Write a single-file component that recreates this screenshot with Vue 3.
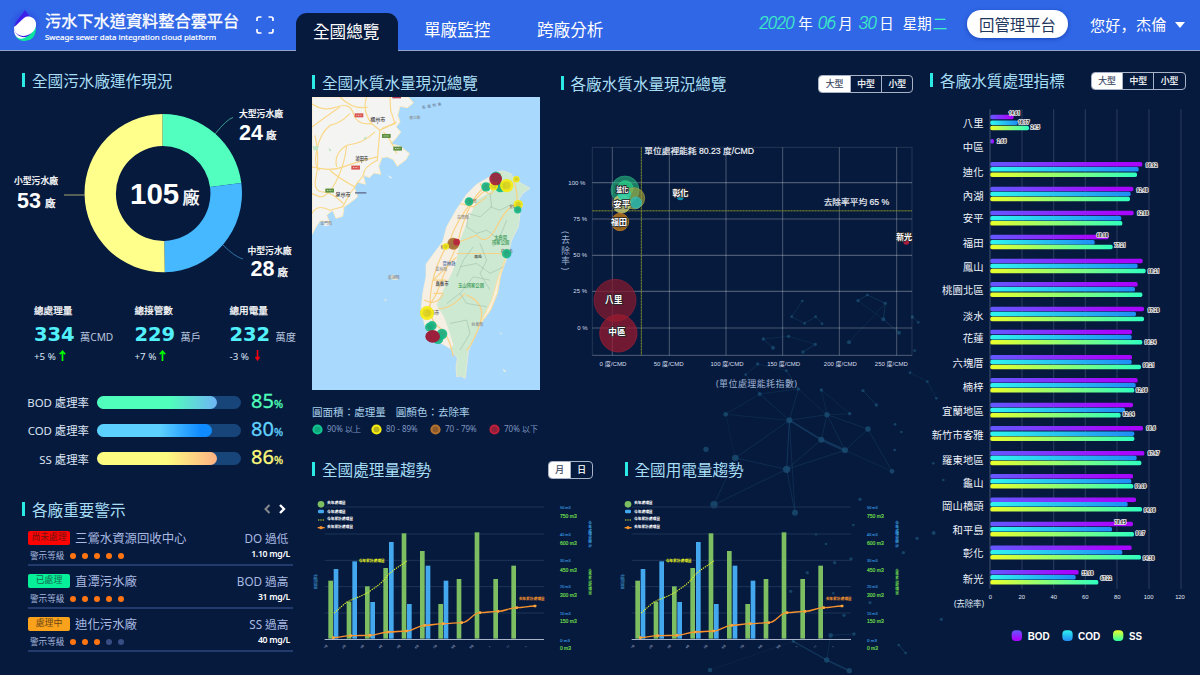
<script setup>
const kpis = [
  { name: '總處理量', value: '334', unit: '萬CMD', delta: '+5 %', up: true },
  { name: '總接管數', value: '229', unit: '萬戶', delta: '+7 %', up: true },
  { name: '總用電量', value: '232', unit: '萬度', delta: '-3 %', up: false }
]
const rates = [
  { name: 'BOD 處理率', value: 85, fill: 120, cls: 'bod' },
  { name: 'COD 處理率', value: 80, fill: 115, cls: 'cod' },
  { name: 'SS 處理率', value: 86, fill: 119.5, cls: 'ss' }
]
const alerts = [
  { tag: '尚未處理', cls: 'red', name: '三鶯水資源回收中心', level: 5, kind: 'DO 過低', val: '1.10 mg/L' },
  { tag: '已處理', cls: 'green', name: '直潭污水廠', level: 5, kind: 'BOD 過高', val: '31 mg/L' },
  { tag: '處理中', cls: 'orange', name: '迪化污水廠', level: 3, kind: 'SS 過高', val: '40 mg/L' }
]
const legend = [
  { t: '90% 以上', c: '#12c28f', d: '#0ca87b' },
  { t: '80 - 89%', c: '#f7ee10', d: '#b9b31d' },
  { t: '70 - 79%', c: '#b5722f', d: '#8d5a2a' },
  { t: '70% 以下', c: '#c01f3c', d: '#8f2039' }
]
const G = '#12b886', Y = '#f5ec10', B = '#a86c30', R = '#a51d3d'
const pins = [
  [588, 350, 16, G], [558, 380, 14, G], [601, 380, 16, G], [581, 378, 13, Y], [587, 356, 19, R], [620, 376, 20, Y], [649, 357, 10, Y],
  [507, 424, 13, G], [655, 433, 14, Y], [653, 449, 11, G], [460, 551, 18, B], [470, 546, 10, '#c01f3c'], [437, 559, 10, Y],
  [620, 581, 14, G], [381, 759, 21, Y], [396, 797, 14, G], [388, 801, 13, G], [426, 822, 16, G], [414, 836, 16, G]
]
const mapText = [
  [233, 176, '福州市', '#333', 15], [185, 294, '莆田市', '#333', 13], [129, 400, '泉州市', '#333', 15], [79, 489, '金門縣', '#888', 12],
  [344, 171, '連江縣', '#888', 11], [281, 652, '澎湖縣', '#888', 12], [489, 469, '苗栗縣', '#888', 12], [602, 531, '太魯閣', '#3a9b55', 13],
  [602, 547, '國家公園', '#3a9b55', 13], [513, 674, '玉山國家公園', '#3a9b55', 13], [447, 609, '雲林縣', '#4a6da8', 13], [424, 626, '雲林縣', '#999', 12],
  [426, 668, '嘉義市', '#333', 13], [532, 792, '台東縣', '#888', 12], [534, 590, '南投', '#333', 11], [644, 440, '宜蘭縣', '#777', 11],
  [398, 755, '台南市', '#555', 13], [518, 422, '新竹', '#555', 12], [434, 560, '彰化', '#555', 12], [620, 574, '花蓮市', '#555', 12]
]
const badges = [[177, 165, '#d9534f'], [259, 227, '#5c8f3f'], [167, 322, '#d9534f'], [89, 391, '#5c8f3f'], [293, 265, '#5c8f3f'], [290, 108, '#b33b52']]
const xTicks = [[187, '0 度/CMD', 189], [358, '50 度/CMD', 356], [528, '100 度/CMD', 531], [698, '150 度/CMD', 701], [868, '200 度/CMD', 871], [1040, '250 度/CMD', 1024]]
const yTicks = [[368, '100 %'], [477, '75 %'], [586, '50 %'], [694, '25 %'], [804, '0 %']]
const bubbles = [
  [225, 390, 42, 'rgba(42,190,130,.6)', '#2aa57c'], [226, 385, 23, 'rgba(40,230,140,.55)', '#37d38c'], [252, 415, 32, 'rgba(170,170,60,.6)', '#a3a344'],
  [258, 428, 17, 'rgba(30,190,190,.75)', '#4bb'], [215, 432, 27, 'rgba(200,205,120,.8)', '#d6cf62'], [223, 403, 20, 'rgba(25,210,180,.75)', 'none'],
  [210, 486, 26, 'rgba(170,110,25,.9)', '#c9862a'], [391, 411, 10, '#138fae', 'none'], [1069, 545, 9, '#a81c3c', 'none'],
  [195, 721, 63, 'rgba(130,25,45,.75)', '#8e2138'], [205, 820, 56, 'rgba(160,25,45,.7)', '#9e2138']
]
const bubbleText = [
  [217, 387, '迪化', 20, 36], [215, 433, '安平', 25, 50], [207, 486, '福田', 25, 48], [391, 400, '彰化', 25, 48],
  [1062, 532, '新光', 25, 48], [191, 719, '八里', 26, 52], [201, 817, '中區', 26, 52]
]
const trends = [
  { title: '全國處理量趨勢', cls: 'first', toggle: true, y2: '今年處理量統計', y3: '今年累計處理量' },
  { title: '全國用電量趨勢', cls: 'second', toggle: false, y2: '今年處理量統計', y3: '今年累計處理量' }
]
const greenBars = [[92, 377], [147, 440], [202, 394], [257, 339], [312, 235], [367, 288], [422, 447], [477, 372], [531, 232], [587, 372], [641, 332]]
const blueBars = [[108, 342], [164, 319], [218, 441], [274, 261], [328, 447], [384, 332], [438, 377]]
const months = ['1月', '2月', '3月', '4月', '5月', '6月', '7月', '8月', '9月', '1', '11', '1']
const linePts = [[100, 548], [152, 542], [210, 541], [265, 531], [320, 528], [374, 511], [430, 506], [485, 503], [540, 473], [594, 469], [650, 458], [705, 453]]
const gridY = [156, 237, 316, 395, 474]
const cubic = ['50 m3', '40 m3', '30 m3', '20 m3', '10 m3', '0 m3']
const cubicY = [157, 238, 317, 395, 474, 556]
const total = [['750 m3', 182], ['600 m3', 264], ['450 m3', 345], ['300 m3', 420], ['150 m3', 497], ['0 m3', 579]]
const chartLegend = [[142, '去年處理量', 56], [168, '今年處理量', 56], [190, '今年累計處理量', 78], [213, '去年累計處理量', 78]]
const plants = [
  { n: '八里', y: 190, b: [[171, 281], [188, 293], [204, 327]], l: [[283, 160, '14.61'], [311, 185, '16.77'], [346, 201, '24.5']] },
  { n: '中區', y: 262, b: [[244, 222]], l: [[245, 244, '2.66']] },
  { n: '迪化', y: 335, b: [[313, 667], [328, 656], [344, 651]], l: [[695, 314, '96.92']] },
  { n: '內湖', y: 408, b: [[387, 640], [402, 632], [417, 630]], l: [[667, 391, '92.48']] },
  { n: '安平', y: 474, b: [[459, 641], [475, 604], [490, 607]], l: [[669, 458, '92.88']] },
  { n: '福田', y: 548, b: [[531, 566], [547, 524], [561, 578]], l: [[547, 526, '68.98'], [600, 556, '77.21']] },
  { n: '鳳山', y: 620, b: [[603, 668], [618, 653], [633, 677]], l: [[701, 633, '98.21']] },
  { n: '桃園北區', y: 690, b: [[673, 653], [688, 645], [704, 667]], l: [] },
  { n: '淡水', y: 767, b: [[747, 672], [762, 648], [777, 672]], l: [[701, 749, '97.28']] },
  { n: '花蓮', y: 834, b: [[816, 636], [832, 635], [847, 667]], l: [[691, 847, '96.34']] },
  { n: '六塊厝', y: 910, b: [[892, 636], [906, 635], [921, 663]], l: [[686, 916, '96.21']] },
  { n: '楠梓', y: 980, b: [[961, 653], [976, 647], [991, 643]], l: [[665, 991, '92.96']] },
  { n: '宜蘭地區', y: 1054, b: [[1035, 639], [1050, 615], [1066, 602]], l: [[626, 1061, '82.04']] },
  { n: '新竹市客雅', y: 1125, b: [[1105, 669], [1121, 643], [1136, 643]], l: [[693, 1105, '96.6']] },
  { n: '羅東地區', y: 1200, b: [[1180, 673], [1194, 650], [1209, 664]], l: [[701, 1180, '97.47']] },
  { n: '龜山', y: 1268, b: [[1249, 639], [1264, 634], [1279, 640]], l: [[662, 1277, '90.09']] },
  { n: '岡山橋頭', y: 1339, b: [[1319, 648], [1333, 623], [1348, 666]], l: [[689, 1349, '94.96']] },
  { n: '和平島', y: 1411, b: [[1392, 639], [1408, 576], [1423, 642]], l: [[601, 1386, '78.65'], [661, 1418, '90.7']] },
  { n: '彰化', y: 1480, b: [[1463, 635], [1477, 607], [1492, 663]], l: [[686, 1493, '94.38']] },
  { n: '新光', y: 1557, b: [[1537, 476], [1552, 467], [1567, 535]], l: [[503, 1538, '55.98'], [558, 1553, '67.22']] }
]
const rightTicks = [[211, '0'], [305, '20'], [401, '40'], [496, '60'], [592, '80'], [686, '100'], [780, '120']]
const series = [['BOD', 275, 323, 66], ['COD', 427, 474, 67], ['SS', 579, 627, 39]]
const gridX = [306, 401, 496, 591, 687, 783]
const nodes = [
  [928, 571, 9], [1041, 554, 8], [1024, 629, 9], [1095, 661, 9], [1164, 597, 8], [920, 718, 11], [766, 684, 10], [737, 553, 7], [839, 492, 6], [678, 658, 8],
  [945, 848, 9], [702, 824, 11], [1236, 724, 7], [1109, 551, 5], [1189, 525, 5], [1149, 482, 5], [1024, 480, 5], [955, 477, 5], [919, 422, 4], [833, 402, 5],
  [797, 434, 4], [879, 353, 6], [850, 327, 5], [926, 319, 5], [969, 366, 5], [1006, 343, 5], [1107, 337, 6], [1134, 212, 5], [1162, 195, 4], [1216, 220, 5],
  [1210, 268, 6], [1257, 308, 6], [1297, 261, 5], [1315, 277, 4], [935, 260, 4], [974, 280, 4], [1007, 260, 4], [1026, 281, 4], [967, 213, 4], [1290, 428, 4],
  [1342, 455, 4], [1369, 505, 4], [1304, 362, 4], [1361, 909, 6], [1311, 925, 5], [1270, 968, 5], [1040, 1290, 8], [1108, 1322, 8], [690, 1320, 7], [1052, 1216, 7],
  [1122, 1212, 5], [940, 1234, 5], [1256, 1245, 4], [1277, 1269, 4], [1140, 808, 5], [1008, 913, 4], [1038, 942, 4], [982, 1028, 5], [932, 1084, 5], [1113, 987, 5],
  [1092, 1156, 5], [1064, 998, 5], [1244, 660, 4], [1264, 606, 4], [1245, 583, 4], [1384, 1168, 5], [1120, 885, 4], [1170, 1118, 5], [1060, 1090, 4],
  [1440, 590, 5], [1390, 750, 4], [1360, 700, 4]
]
const links = [
  [0, 1, 2], [0, 2, 5], [2, 3, 7], [1, 3, 2], [1, 2, 2], [1, 4, 2], [3, 4, 2], [0, 5, 3], [5, 2, 2], [5, 3, 2], [5, 6, 2], [5, 10, 2], [0, 6, 2], [0, 10, 2], [5, 11, 2], [6, 11, 2],
  [0, 7, 1.5], [7, 8, 1.5], [8, 17, 1.5], [17, 0, 2], [17, 1, 1.5], [16, 1, 1.5], [16, 13, 1.5], [13, 1, 1.5], [15, 14, 2.5], [17, 18, 2], [18, 19, 1.5], [19, 20, 2], [20, 8, 1.5],
  [4, 12, 2], [3, 12, 1.5], [21, 22, 2], [22, 23, 1.5], [24, 25, 2.5], [25, 23, 1.5], [26, 29, 1.5], [27, 28, 2.5], [28, 29, 2.5], [29, 30, 2.5], [30, 31, 2.5], [27, 30, 1.5],
  [32, 33, 2], [34, 35, 2], [35, 36, 2], [36, 37, 2], [34, 38, 2], [39, 40, 1.5], [40, 41, 1.5], [46, 47, 5], [46, 51, 4], [49, 50, 2], [49, 46, 2], [52, 53, 3], [6, 7, 1], [8, 0, 2], [48, 51, 1]
]
const smooth = (p) => {
  let d = `M${p[0]}`
  for (let i = 1; i < p.length; i++) {
    const m = (p[i][0] - p[i - 1][0]) * 0.42
    d += ` C${p[i - 1][0] + m},${p[i - 1][1]} ${p[i][0] - m},${p[i][1]} ${p[i]}`
  }
  return d
}
const linePath = smooth(linePts)
</script>

<template>
  <div class="page">
    <svg class="network" viewBox="480 230 470 445">
      <g transform="translate(480 230) scale(.33333)">
        <line v-for="(l, i) in links" :key="'l' + i" :x1="nodes[l[0]][0]" :y1="nodes[l[0]][1]" :x2="nodes[l[1]][0]" :y2="nodes[l[1]][1]" stroke="#1b4a70" :stroke-width="l[2]" opacity=".6" />
        <circle v-for="(n, i) in nodes" :key="'n' + i" :cx="n[0]" :cy="n[1]" :r="n[2]" fill="#1b5074" opacity=".75" />
      </g>
    </svg>

    <header>
      <svg class="logo" viewBox="0 0 32 38">
        <defs><radialGradient id="halo"><stop offset="0" stop-color="#2a3fe0" /><stop offset="1" stop-color="#2a3fe0" stop-opacity="0" /></radialGradient></defs>
        <circle cx="16" cy="17" r="16" fill="url(#halo)" />
        <path d="M16 3 C13.500 8 5 14 5 23 A11 11 0 0 0 27 23 C27 14 19 8 16 3Z" fill="#3c1fe8" />
        <path d="M26 17 C29 25 25 34 16 34 C11 34 8 32 6 28 C13 34 24 30 26 17Z" fill="#0be3a0" />
        <path d="M15 11 C19 8 26 10 27 16 C28 24 20 29 14 29 C7 28 5 24 5 20 C8 18 11 14 15 11Z" fill="#fff" />
        <path d="M5 21 C6 27 11 31 17 30 C12 34 4 31 5 21Z" fill="#fff" />
      </svg>
      <div class="brand">
        <h1>污水下水道資料整合雲平台</h1>
        <p>Sweage sewer data integration cloud platform</p>
      </div>
      <svg class="full" viewBox="0 0 18 18"><path d="M1 5V3Q1 1 3 1H5.500M12.500 1H15Q17 1 17 3V5M17 13V15Q17 17 15 17H12.500M5.500 17H3Q1 17 1 15V13" fill="none" stroke="#fff" stroke-width="1.700" /></svg>
      <nav>
        <a class="active">全國總覽</a><a>單廠監控</a><a>跨廠分析</a>
      </nav>
      <div class="date"><i>2020</i><span class="yr">年</span><i>06</i><span>月</span><i class="d3">30</i><span>日</span><span class="wk">星期<b>二</b></span></div>
      <button class="back">回管理平台</button>
      <div class="user"><u>您好，</u><span>杰倫</span><em></em></div>
    </header>

    <main>
      <section class="left">
        <h2>全國污水廠運作現況</h2>
        <svg class="donut" viewBox="0 95 300 195">
          <path d="M162.500 114 A79 79 0 0 1 241.300 183 L210 187 A47.500 47.500 0 0 0 162.500 146Z" fill="#52ffbf" />
          <path d="M241.300 183 A79 79 0 0 1 164.800 272.300 L164.300 241 A47.500 47.500 0 0 0 210 187Z" fill="#45b8ff" />
          <path d="M164.800 272.300 A79 79 0 0 1 162.500 114 L162.500 146 A47.400 47.400 0 0 0 164.300 241Z" fill="#ffff8c" />
          <path d="M215 134 Q227 119 233 117.500" stroke="#3a9d91" fill="none" />
          <path d="M223 245 Q235 257 243 259" stroke="#2e6fa5" fill="none" />
          <path d="M64 195H85" stroke="#a5a574" />
          <g class="w">
            <text x="239" y="113.500" class="m" font-size="8.800" textLength="44">大型污水廠</text>
            <text x="239" y="132.500" font-size="21.500">24</text><text x="266" y="134.500" class="m" font-size="10.500">廠</text>
            <text x="14" y="180" class="m" font-size="8.800" textLength="44">小型污水廠</text>
            <text x="17" y="200.500" font-size="21.500">53</text><text x="45" y="202.500" class="m" font-size="10.500">廠</text>
            <text x="247.500" y="250.500" class="m" font-size="8.800" textLength="44">中型污水廠</text>
            <text x="250.500" y="269" font-size="21.500">28</text><text x="277.500" y="271" class="m" font-size="10.500">廠</text>
            <text x="130" y="193.500" font-size="29.500">105</text><text x="182.500" y="196" class="m" font-size="17">廠</text>
          </g>
        </svg>
        <div class="kpis">
          <div v-for="k in kpis" :key="k.name" class="kpi">
            <h3>{{ k.name }}</h3>
            <p><strong>{{ k.value }}</strong><span>{{ k.unit }}</span></p>
            <div class="delta">{{ k.delta }}
              <svg v-if="k.up" viewBox="0 0 7 11"><path d="M3.500 11V2M.8 4.300L3.500 1.300L6.200 4.300" fill="none" stroke="#0f0" stroke-width="1.700" /></svg>
              <svg v-else class="dn" viewBox="0 0 7 11"><path d="M3.500 0V9M1.500 7L3.500 9.700L5.500 7" fill="none" stroke="#f00010" stroke-width="1.600" /></svg>
            </div>
          </div>
        </div>
        <div class="rates">
          <div v-for="r in rates" :key="r.name" class="rate" :class="r.cls">
            <span class="rl">{{ r.name }}</span>
            <div class="track"><div class="fill" :style="{ width: r.fill + 'px' }"></div></div>
            <span class="rv">{{ r.value }}<small>%</small></span>
          </div>
        </div>
        <div class="ahead"><h2>各廠重要警示</h2>
          <svg viewBox="0 0 24 10"><path d="M6.500 1L2.500 5L6.500 9" fill="none" stroke="#85878c" stroke-width="2" /><path d="M17 1L21 5L17 9" fill="none" stroke="#fff" stroke-width="2.300" /></svg>
        </div>
        <div v-for="a in alerts" :key="a.tag" class="alert">
          <div class="row"><span class="tag" :class="a.cls">{{ a.tag }}</span><span class="an">{{ a.name }}</span><span class="ak">{{ a.kind }}</span></div>
          <div class="row r2"><span class="al">警示等級</span><i v-for="n in 5" :key="n" :class="{ off: n > a.level }"></i><span class="av">{{ a.val }}</span></div>
        </div>
      </section>

      <section class="center">
        <div class="top">
          <div class="mapbox">
            <h2>全國水質水量現況總覽</h2>
            <svg class="map" viewBox="36 110 684 880" preserveAspectRatio="none">
              <rect x="36" y="110" width="684" height="880" fill="#a9d9fd" />
              <path d="M36 110H325L340 128L322 142L300 138L293 165L300 185L288 200L302 215L285 238L270 250L300 258L328 280L318 298L292 318L280 298L262 290L246 292L236 318L242 342L222 338L208 352L190 345L196 372L172 365L163 382L172 410L150 428L132 440L128 468L108 474L98 450L80 465L88 485L60 482L48 500L36 522Z" fill="#f4f4f3" stroke="#fdebc0" stroke-width="3" />
              <path d="M262 345l14 6l-4 4zM70 490l25-5l-5 10l-18 3z" fill="#f4f4f3" />
              <g fill="none" stroke="#f9d888" stroke-width="3.500">
                <path d="M36 130Q70 155 110 140T160 160T215 190L240 210Q270 195 290 185M200 110Q185 150 215 190M120 110Q160 150 205 140M240 210Q235 260 232 300Q190 320 190 345Q150 395 128 440L90 450Q50 430 36 460" />
                <path d="M36 320Q90 335 130 320T232 290M140 255Q135 310 110 360T60 410L36 400M140 255Q190 250 225 215M90 195Q60 220 50 270T60 330M45 225Q60 300 48 350T80 395M36 200Q90 160 120 140M140 255Q100 280 110 320M165 380Q110 350 90 330M130 430Q100 400 75 395M250 215Q275 240 290 280M270 110L272 150L285 190L245 205M150 160Q120 190 90 195" />
              </g>
              <path d="M85 262l10 8l-6 4zM38 258l18 0l-3 12l-12 0zM190 235l10-8l-4 12z" fill="#bfe5c4" />
              <path d="M610 332L632 340L645 358L668 372L690 384L668 400L650 428L660 462L655 500L635 540L622 590L602 645L592 700L572 750L548 782L525 830L506 870L501 910L496 955L482 948L470 950L468 920L472 895L452 866L425 850L395 838L376 802L363 750L368 700L378 650L378 612L405 575L428 545L440 500L468 450L500 402L530 372L572 348L590 335Z" fill="#cde9d2" stroke="#f4ead0" stroke-width="2" />
              <path d="M572 348L530 372L500 402L468 450L440 500L428 545L405 575L378 612L378 650L368 700L363 750L376 802L395 838L425 850L452 866L460 855L450 820L432 770L410 735L430 690L455 640L470 600L480 540L500 490L530 420L570 395L600 360Z" fill="#f6efe3" />
              <path d="M618 590L595 650L575 720L535 800L548 782L572 750L592 700L602 645Z" fill="#f8f0dc" stroke="#f8dfa3" stroke-width="3" />
              <g fill="none" stroke="#f9d184" stroke-width="3.500">
                <path d="M605 340Q540 385 520 420Q470 480 450 540Q400 620 392 700T415 800T460 890M590 365Q520 410 500 460T470 560Q430 640 410 700L380 750" />
                <path d="M640 360Q655 400 650 430Q620 440 590 500T530 525L465 550M470 580H600L620 590M372 720Q410 740 430 700M495 700Q450 750 415 745M470 590Q450 610 400 660H440M500 705Q560 730 540 790T500 870M540 370Q570 420 580 390M400 700H430M480 430L520 440L560 410" />
              </g>
              <g fill="none" stroke="#a3c3ad" stroke-width="2">
                <path d="M570 400L575 440L540 470L505 460L500 500L530 520L560 510L600 540M620 480L600 530L580 560M480 620L530 610L570 640L610 620M480 700L520 650L570 660M440 730L480 700L500 730L560 740M450 790L500 780L510 820L480 870M540 550L560 600L540 640L570 690M570 440L600 450L640 430M520 560L490 600L470 650" />
              </g>
              <g v-for="(b, i) in badges" :key="'b' + i"><rect :x="b[0] - 13" :y="b[1] - 6" width="26" height="12" :fill="b[2]" /><path :d="`M${b[0] - 8} ${b[1]}h16`" stroke="#fff" stroke-width="2" stroke-dasharray="3 2" /></g>
              <path d="M268 650l14-8l4 10l12 2l-8 6l-14-2zM252 716l8 4l-4 4zM598 817l8 2l-4 4zM608 926l12 8l-8 2zM265 685l4 3z" fill="#e8eede" />
              <text v-for="(t, i) in mapText" :key="'t' + i" :x="t[0]" :y="t[1]" :fill="t[3]" :font-size="t[4]" text-anchor="middle" class="m">{{ t[2] }}</text>
              <text x="366" y="142" fill="#6d7f9b" font-size="11" letter-spacing="5" transform="rotate(-12 366 142)" class="m">馬祖列島</text>
              <path d="M233 187v3M185 304v3M129 411v3M165 398h34" stroke="#446" stroke-width="3" />
              <g v-for="(p, i) in pins" :key="'p' + i"><circle :cx="p[0]" :cy="p[1]" :r="p[2]" :fill="p[3]" opacity=".92" /><circle :cx="p[0]" :cy="p[1]" :r="p[2] * .6" fill="#654" opacity=".16" /></g>
              <ellipse cx="398" cy="829" rx="22" ry="19" fill="#9c1f3c" />
            </svg>
            <p class="lt"><span>圓面積：處理量</span><span>圓顏色：去除率</span></p>
            <div class="lg"><span v-for="l in legend" :key="l.t"><svg viewBox="0 0 11 11"><circle cx="5.500" cy="5.500" r="5.100" :fill="l.c" /><circle cx="5.500" cy="5.500" r="3" :fill="l.d" /></svg>{{ l.t }}</span></div>
          </div>
          <div class="scatter">
            <div class="hd"><h2>各廠水質水量現況總覽</h2><div class="seg"><b>大型</b><b>中型</b><b>小型</b></div></div>
            <svg viewBox="0 180 1125 840">
              <g stroke="#fff" fill="none">
                <rect x="127" y="262" width="959" height="624" opacity=".12" stroke-width="3" />
                <path v-for="t in xTicks" :key="t[0]" :d="`M${t[0]} 262V886`" opacity=".28" stroke-width="3" />
                <path v-for="t in yTicks" :key="t[0]" :d="`M127 ${t[0]}H1086`" opacity=".28" stroke-width="3.500" />
                <path d="M127 886H1086" opacity=".2" stroke-width="3" />
              </g>
              <path d="M274 262V886M127 452.500H1086" stroke="#85902a" stroke-width="3" stroke-dasharray="7 2" fill="none" />
              <circle v-for="(b, i) in bubbles" :key="i" :cx="b[0]" :cy="b[1]" :r="b[2]" :fill="b[3]" :stroke="b[4]" stroke-width="2" />
              <text v-for="t in bubbleText" :key="t[2]" :x="t[0]" :y="t[1]" :font-size="t[3]" :textLength="t[4]" class="bt" text-anchor="middle">{{ t[2] }}</text>
              <text x="283" y="273" class="wt" font-size="25" textLength="329" lengthAdjust="spacingAndGlyphs">單位處裡能耗 80.23 度/CMD</text>
              <text x="821" y="427" class="wt" font-size="25.500" textLength="197" lengthAdjust="spacingAndGlyphs">去除率平均 65 %</text>
              <text v-for="t in yTicks" :key="t[1]" :x="t[0] === 804 ? 113 : t[0] === 368 ? 106 : 111" :y="t[0]" class="tick" font-size="18" text-anchor="end">{{ t[1] }}</text>
              <text v-for="t in xTicks" :key="t[1]" :x="t[2]" y="912" class="tick" font-size="18" text-anchor="middle" :textLength="t[1].length * 9 + 18" lengthAdjust="spacingAndGlyphs">{{ t[1] }}</text>
              <text x="498" y="970" fill="#9db0cf" font-size="27" textLength="243">(單位處理能耗指數)</text>
              <text x="44" y="514" fill="#9db0cf" font-size="26" class="vert" textLength="116">(去除率)</text>
            </svg>
          </div>
        </div>
        <div class="bottom">
          <div v-for="t in trends" :key="t.title" class="trend" :class="t.cls">
            <div class="hd"><h2>{{ t.title }}</h2><div v-if="t.toggle" class="seg two"><b>月</b><b>日</b></div></div>
            <svg viewBox="0 120 930 480">
              <path v-for="y in gridY" :key="y" :d="`M74 ${y}H732`" stroke="#1d3559" stroke-width="3" />
              <rect v-for="b in greenBars" :key="'g' + b[0]" :x="b[0] - 7" :y="b[1]" width="14" :height="551 - b[1]" fill="#7dbe62" />
              <rect v-for="b in blueBars" :key="'u' + b[0]" :x="b[0] - 7" :y="b[1]" width="14" :height="551 - b[1]" fill="#43a8ee" />
              <path d="M74 553.500H732" stroke="#a7b4c9" stroke-width="3" />
              <path d="M102 474C120 460 130 447 147 438S185 425 207 410S245 385 260 365S300 335 322 316" fill="none" stroke="#dff028" stroke-width="3.500" stroke-dasharray="4 3" />
              <path :d="linePath" fill="none" stroke="#f7922d" stroke-width="4" />
              <rect v-for="p in linePts" :key="'o' + p[0]" :x="p[0] - 4" :y="p[1] - 4" width="8" height="8" rx="2" fill="#fba63e" />
              <circle cx="63" cy="148" r="10" fill="#7dbe62" /><rect x="54" y="164" width="18" height="11" rx="4" fill="#43a8ee" />
              <path d="M54 195H73" stroke="#dff028" stroke-width="3" stroke-dasharray="4 3" /><path d="M53 218H74" stroke="#f7922d" stroke-width="4" /><circle cx="63" cy="218" r="5" fill="#f7922d" />
              <text v-for="l in chartLegend" :key="l[0]" x="81" :y="l[0]" :textLength="l[2]" font-size="11.500" class="tiny" fill="#fff">{{ l[1] }}</text>
              <text x="176" y="317" textLength="78" font-size="11.500" class="tiny" fill="#e9f21c">今年累計處理量</text>
              <text x="656" y="429" textLength="78" font-size="11.500" class="tiny" fill="#f7922d">去年累計處理量</text>
              <text v-for="(c, i) in cubic" :key="c" x="780" :y="cubicY[i]" font-size="12" :textLength="i === 5 ? 30 : 32" lengthAdjust="spacingAndGlyphs" class="mm bl">{{ c }}</text>
              <text v-for="c in total" :key="c[0]" x="780" :y="c[1]" font-size="15.500" :textLength="c[0] === '0 m3' ? 33 : 50" lengthAdjust="spacingAndGlyphs" class="mm gr">{{ c[0] }}</text>
              <text v-for="(m, i) in months" :key="'m' + i" :x="77 + i * 54.7" y="575" font-size="8" fill="#d3dcea" text-anchor="middle" class="m" :transform="`rotate(-40 ${77 + i * 54.7} 575)`">{{ m }}</text>
              <text x="47" y="358" class="vert" font-size="14" fill="#3a8cc4" textLength="44">處理量</text>
              <text x="870" y="198" class="vert b" font-size="11" fill="#3a9ee0" textLength="78">{{ t.y2 }}</text>
              <text x="870" y="340" class="vert b" font-size="11" fill="#6ddb4c" textLength="78">{{ t.y3 }}</text>
            </svg>
          </div>
        </div>
      </section>

      <section class="right">
        <div class="hd"><h2>各廠水質處理指標</h2><div class="seg"><b>大型</b><b>中型</b><b>小型</b></div></div>
        <svg viewBox="0 135 840 1665">
          <defs>
            <linearGradient id="s0"><stop offset="0" stop-color="#6358ff" /><stop offset=".85" stop-color="#a807ff" /></linearGradient>
            <linearGradient id="s1"><stop offset="0" stop-color="#2ff5ee" /><stop offset="1" stop-color="#1f8df5" /></linearGradient>
            <linearGradient id="s2"><stop offset="0" stop-color="#e9ff2c" /><stop offset="1" stop-color="#2fffc0" /></linearGradient>
            <linearGradient id="v0" x2="0" y2="1"><stop offset="0" stop-color="#6358ff" /><stop offset=".8" stop-color="#a807ff" /></linearGradient>
            <linearGradient id="v1" x2="0" y2="1"><stop offset="0" stop-color="#2ff0ee" /><stop offset="1" stop-color="#1f8df5" /></linearGradient>
            <linearGradient id="v2" x2="0" y2="1"><stop offset="0" stop-color="#e9ff2c" /><stop offset="1" stop-color="#2fffa0" /></linearGradient>
          </defs>
          <path d="M210 148V1586" stroke="#40516f" stroke-width="3" />
          <path v-for="x in gridX" :key="x" :d="`M${x} 148V1586`" stroke="#263a5b" stroke-width="3.500" />
          <g v-for="p in plants" :key="p.n">
            <rect v-for="(b, i) in p.b" :key="i" x="211" :y="b[0] - 6.7" :width="b[1] - 211" height="13.400" rx="5" :fill="`url(#s${i})`" />
            <text x="191" :y="p.y" text-anchor="end" fill="#eef3fb" font-size="31" :textLength="p.n.length * 31.2">{{ p.n }}</text>
          </g>
          <g v-for="p in plants" :key="'v' + p.n">
            <text v-for="l in p.l" :key="l[2]" :x="l[0]" :y="l[1]" text-anchor="middle" class="val" font-size="13" :textLength="l[2].length * 6.7">{{ l[2] }}</text>
          </g>
          <text v-for="t in rightTicks" :key="t[1]" :x="t[0]" y="1611" text-anchor="middle" fill="#e3eaf5" font-size="17.500" class="ar">{{ t[1] }}</text>
          <text x="102" y="1633" fill="#dde6f3" font-size="26" textLength="90">(去除率)</text>
          <g v-for="(s, i) in series" :key="s[0]"><rect :x="s[1]" y="1711" width="31" height="32" rx="12" :fill="`url(#v${i})`" /><text :x="s[2]" y="1728" class="leg" font-size="30" :textLength="s[3]" lengthAdjust="spacingAndGlyphs">{{ s[0] }}</text></g>
        </svg>
      </section>
    </main>
  </div>
</template>

<style>
body { background: #061a3d; overflow: hidden; }
</style>

<style scoped>
* { box-sizing: border-box; margin: 0; padding: 0; }
.page { position: relative; width: 1200px; height: 675px; background: #061a3d; overflow: hidden; font-family: "Noto Sans", "Noto Sans CJK TC", sans-serif; color: #fff; }
svg { display: block; }
svg text { dominant-baseline: central; font-family: "Noto Sans", "Noto Sans CJK TC", sans-serif; }
.network { position: absolute; left: 480px; top: 230px; width: 470px; height: 445px; }
header { position: relative; height: 51px; background: #3067e6; border-bottom: 1px solid #8fa3cc; display: flex; }
.logo { width: 32px; height: 38px; margin: 7px 0 0 9px; flex: none; }
.brand { margin-left: 4px; width: 211px; flex: none; }
.brand h1 { font: 400 16.2px/22px "Noto Sans CJK TC", sans-serif; margin-top: 9px; white-space: nowrap; -webkit-text-stroke: .35px #fff; }
.brand p { font: 400 7.9px/10px "Noto Sans", sans-serif; white-space: nowrap; margin-top: 1px; -webkit-text-stroke: .2px #fff; }
.full { width: 18px; height: 18px; margin-top: 16px; flex: none; }
nav { display: flex; margin-left: 22px; width: 463px; flex: none; }
nav a { font-size: 16.6px; line-height: 24px; padding-top: 18px; white-space: nowrap; margin-left: 26px; width: 87px; }
nav .active { background: #061a3d; height: 38px; margin: 13px 0 0; padding: 7px 0 0 17px; width: 102px; border-radius: 11px 11px 0 0; }
.date { display: flex; font-size: 14.5px; line-height: 20px; padding-top: 13px; width: 208px; flex: none; white-space: nowrap; }
.date i { color: #3ff0c4; font: italic 300 18px/20px Roboto, sans-serif; letter-spacing: -.9px; -webkit-text-stroke: .2px #3ff0c4; }
.date b { color: #3ff0c4; font-weight: 400; margin-left: 1px; }
.date .yr { margin: 0 5px 0 4px; }
.date i + span { margin-left: 3px; }
.date .d3 { margin-left: 6px; }
.date .wk { margin-left: 9px; }
.back { width: 101px; height: 28px; margin-top: 10px; border: 0; border-radius: 14px; background: #fff; color: #22355c; font: 15.4px/28px "Noto Sans CJK TC", sans-serif; box-shadow: 0 1px 4px #1a46b8; white-space: nowrap; }
.user { display: flex; margin-left: 22px; font-size: 15.2px; line-height: 22px; padding-top: 13px; white-space: nowrap; }
.user u { text-decoration: none; font-family: "Noto Sans CJK JP", sans-serif; width: 46px; }
.user span { width: 39px; }
.user em { border: 5px solid transparent; border-top: 6px solid #fff; border-bottom: 0; height: 0; margin-top: 9px; }
main { position: relative; display: grid; grid-template-columns: 300px 620px 280px; height: 624px; }
h2 { font-weight: 400; font-size: 15.6px; line-height: 20px; color: #a7def5; padding-left: 10px; white-space: nowrap; display: flex; align-items: center; }
h2::before { content: ""; width: 3px; height: 14px; background: #2be9e4; margin: -2px 7px 0 -10px; }
.left h2 { margin: 20px 0 0 22px; padding-left: 10px; }
.donut { width: 300px; height: 195px; margin-top: 4px; }
.w text { fill: #fff; font-weight: 700; font-family: "Liberation Sans", sans-serif; }
.w text.m { font-weight: 500; font-family: "Noto Sans CJK TC", sans-serif; stroke: #fff; stroke-width: .2px; }
.kpis { display: grid; grid-template-columns: 100.5px 95px 80px; margin: 14px 0 0 34px; }
.kpi h3 { font-size: 9.6px; line-height: 14px; font-weight: 400; white-space: nowrap; -webkit-text-stroke: .25px #fff; }
.kpi p { display: flex; align-items: baseline; white-space: nowrap; line-height: 22px; margin-top: 6px; }
.kpi strong { font: 700 19.5px/22px "DejaVu Sans", "Noto Sans", sans-serif; color: #52f0fb; width: 46px; letter-spacing: -.1px; }
.kpi p span { font-size: 10.2px; color: #b9c6df; }
.delta { display: flex; align-items: center; font-size: 9.8px; line-height: 14px; color: #dbe4f4; margin-top: 2px; height: 14px; }
.delta svg { width: 7px; height: 11px; margin: -3px 0 0 3px; }
.delta .dn { margin-left: 5px; }
.rates { margin-top: 24px; display: grid; grid-auto-rows: 28.3px; }
.rate { display: flex; align-items: center; }
.rl { width: 89px; text-align: right; font-size: 11.4px; color: #dbe4f4; white-space: nowrap; }
.track { width: 144px; height: 13px; border-radius: 7px; background: #17457a; margin-left: 8px; }
.fill { height: 13px; border-radius: 7px; }
.bod .fill { background: linear-gradient(90deg, #50ffbb 60%, #6fb4f5); }
.cod .fill { background: linear-gradient(90deg, #5cd0ff 55%, #108bff 90%); }
.ss .fill { background: linear-gradient(90deg, #fdfb80 58%, #ffb184); }
.rv { margin-left: 10px; font-size: 20px; line-height: 26px; -webkit-text-stroke: .3px currentColor; white-space: nowrap; }
.rv small { font-size: 11px; }
.bod .rv { color: #50ffbb; } .cod .rv { color: #62d2ff; } .ss .rv { color: #fdf97b; }
.ahead { display: flex; margin-top: 27px; justify-content: space-between; }
.ahead h2 { margin-top: 0; }
.ahead svg { width: 24px; height: 10px; margin: 4px 13.5px 0 0; }
.alert { margin-left: 28px; width: 265px; height: 43px; border-bottom: 2px solid #233a6c; padding-top: 8px; }
.ahead + .alert { height: 46px; padding-top: 11px; }
.row { display: flex; align-items: center; height: 14px; white-space: nowrap; }
.tag { width: 42px; height: 14px; border-radius: 2px; color: #3b4a3c; text-align: center; font-size: 8.8px; line-height: 13.5px; }
.tag.red { background: #fd0303; color: #6f1313; } .tag.green { background: #06f099; color: #17694f; } .tag.orange { background: #faa21b; color: #6b4617; }
.an { margin-left: 5px; font-size: 12.4px; color: #a9b9e2; }
.ak { margin-left: auto; margin-right: 4.5px; font-size: 11.7px; color: #a9b9e2; }
.r2 { height: 17px; padding-top: 5px; }
.al { font-size: 8.6px; color: #a5b5dc; width: 42px; padding-left: 2px; }
.r2 i { width: 6px; height: 6px; border-radius: 50%; background: #ff7512; margin-right: 6px; }
.r2 i.off { background: #374d84; }
.av { margin-left: auto; margin-right: 3px; margin-top: -4px; font-size: 8.7px; font-weight: 600; letter-spacing: -.3px; }
.top { display: grid; grid-template-columns: 250px 370px; height: 400px; }
.mapbox { padding: 22px 0 0 12px; }
.map { width: 228px; height: 293px; margin-top: 4px; }
.map text { font-family: "Noto Sans CJK TC", sans-serif; font-weight: 500; }
.lt { display: flex; gap: 10px; font-size: 10.6px; line-height: 14px; margin-top: 15px; color: #a7cfea; white-space: nowrap; letter-spacing: -.05px; }
.lg { display: grid; grid-template-columns: 59px 59px 59px 60px; margin-top: 3px; font-size: 8px; line-height: 14px; color: #7f96c0; white-space: nowrap; }
.lg span { display: flex; align-items: center; gap: 4px; }
.lg svg { width: 11px; height: 11px; }
.hd { display: flex; align-items: flex-start; }
.scatter { padding-top: 23px; }
.scatter .hd { padding-left: 10.5px; height: 46px; }
.scatter .seg { margin: 1px 0 0 92px; }
.scatter svg { width: 375px; height: 280px; }
.seg { display: flex; width: 95px; height: 17.5px; border: 1px solid #a9b3c7; border-radius: 4px; font-size: 8.8px; overflow: hidden; flex: none; }
.seg b { flex: 1; text-align: center; line-height: 16px; font-weight: 400; border-left: 1px solid #a9b3c7; -webkit-text-stroke: .2px currentColor; }
.seg b:first-child { background: #fff; color: #3b475f; border: 0; }
.seg.two { width: 45px; margin: 1px 0 0 117px; }
.bt { fill: #fff; font-weight: 700; stroke: #26262c; stroke-width: 5px; paint-order: stroke; }
svg text.bt, svg text.wt { font-family: "Liberation Sans", "Noto Sans CJK TC", sans-serif; }
.wt { fill: #f2f5fa; stroke: #f2f5fa; stroke-width: .5px; }
svg text.tick, svg text.ar { font-family: "Liberation Sans", "Noto Sans CJK TC", sans-serif; }
.tick { fill: #d5deed; }
svg text.vert { writing-mode: vertical-rl; text-orientation: mixed; }
.vert.b { font-weight: 700; }
.bottom { display: grid; grid-template-columns: 307px 313px; }
.trend { padding-top: 9px; }
.trend .hd { height: 35px; padding-left: 12px; }
.second .hd { padding-left: 17.5px; }
.trend svg { width: 310px; height: 160px; }
.tiny { font-weight: 700; }
svg text.mm { font-family: "Liberation Sans", sans-serif; }
.bl { fill: #3a9ee0; stroke: #3a9ee0; stroke-width: .3px; }
.gr { fill: #6ddb4c; stroke: #6ddb4c; stroke-width: .6px; }
.right .hd { padding: 20px 0 0 10px; height: 54px; }
.right .seg { margin: 1px 0 0 26px; }
.right > svg { width: 280px; height: 555px; }
.val { fill: #1b1b1b; font-weight: 700; stroke: #e8e8ea; stroke-width: 5px; paint-order: stroke; }
svg text.leg { font-family: "Liberation Sans", sans-serif; font-weight: 700; fill: #fff; }
</style>
